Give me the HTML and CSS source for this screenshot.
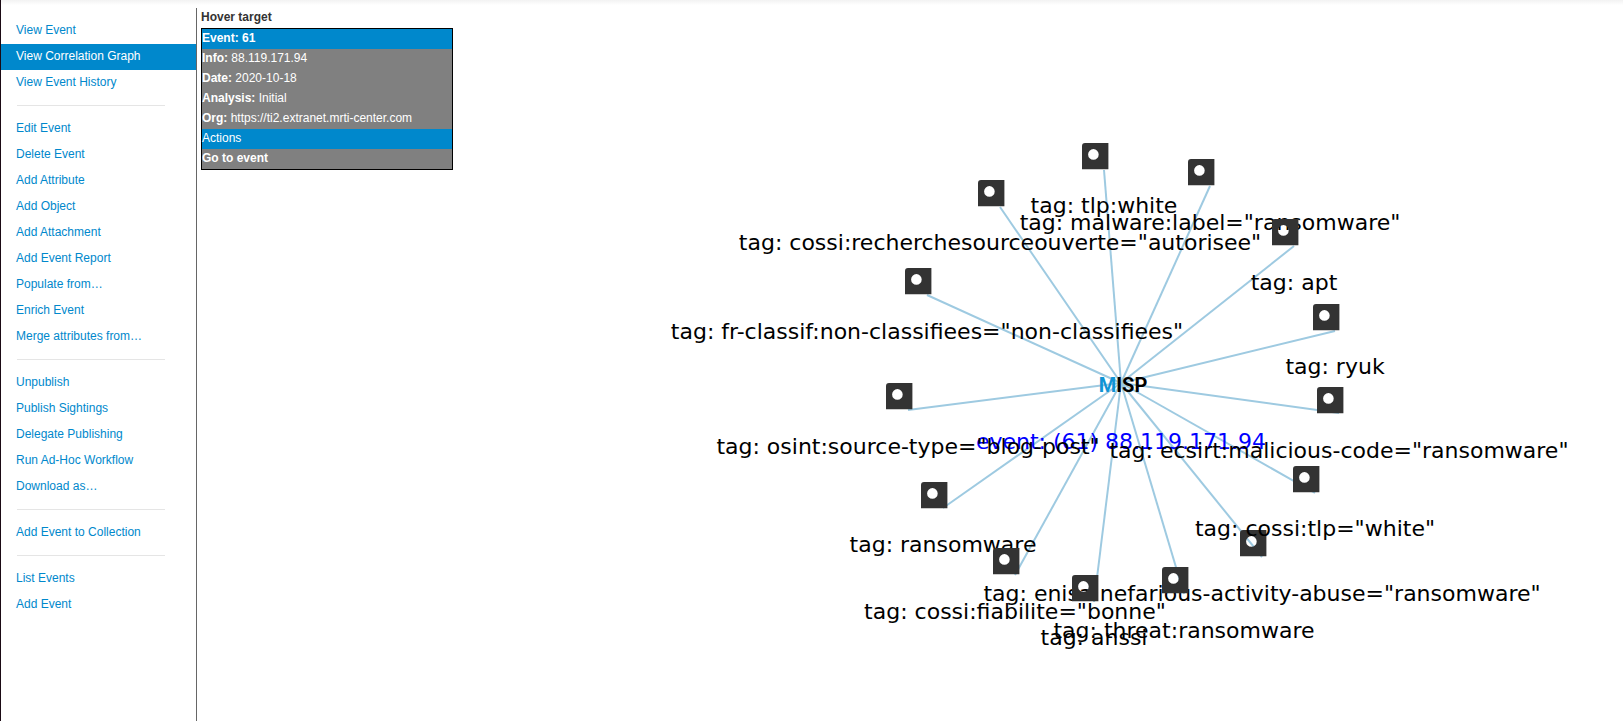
FILE: index.html
```html
<!DOCTYPE html>
<html lang="en">
<head>
<meta charset="utf-8">
<title>Correlation Graph</title>
<link rel="stylesheet" href="styles.css">
</head>
<body>
<div class="page">
  <nav class="sidebar" aria-label="Event menu">
    <ul class="menu">
      <li><a href="#">View Event</a></li>
      <li><a href="#" class="active" aria-current="page">View Correlation Graph</a></li>
      <li><a href="#">View Event History</a></li>
      <li class="divider"></li>
      <li><a href="#">Edit Event</a></li>
      <li><a href="#">Delete Event</a></li>
      <li><a href="#">Add Attribute</a></li>
      <li><a href="#">Add Object</a></li>
      <li><a href="#">Add Attachment</a></li>
      <li><a href="#">Add Event Report</a></li>
      <li><a href="#">Populate from…</a></li>
      <li><a href="#">Enrich Event</a></li>
      <li><a href="#">Merge attributes from…</a></li>
      <li class="divider"></li>
      <li><a href="#">Unpublish</a></li>
      <li><a href="#">Publish Sightings</a></li>
      <li><a href="#">Delegate Publishing</a></li>
      <li><a href="#">Run Ad-Hoc Workflow</a></li>
      <li><a href="#">Download as…</a></li>
      <li class="divider"></li>
      <li><a href="#">Add Event to Collection</a></li>
      <li class="divider"></li>
      <li><a href="#">List Events</a></li>
      <li><a href="#">Add Event</a></li>
    </ul>
  </nav>
  <main class="content">
    <svg class="graph" viewBox="197 0 1426 721" preserveAspectRatio="xMidYMin meet" role="img" aria-label="Correlation graph">
      <defs>
        <path id="tag" d="M-22 -24 a3 3 0 0 1 3 -3 H4.4 V-.8 H-22 Z M-15.9 -15.6 a5.3 5.3 0 1 0 10.6 0 a5.3 5.3 0 1 0 -10.6 0 Z" fill-rule="evenodd"/>
      </defs>
      <g class="links">
        <path d="M1121 383 L1000 207"/>
        <path d="M1121 383 L927 295"/>
        <path d="M1121 383 L1104 170"/>
        <path d="M1121 383 L1210 186"/>
        <path d="M1121 383 L1294 246"/>
        <path d="M1121 383 L1335 331"/>
        <path d="M1121 383 L1339 413"/>
        <path d="M1121 383 L1315 493"/>
        <path d="M1121 383 L1262 557"/>
        <path d="M1121 383 L1184 594"/>
        <path d="M1121 383 L1094 602"/>
        <path d="M1121 383 L1015 575"/>
        <path d="M1121 383 L943 508"/>
        <path d="M1121 383 L908 410"/>
      </g>
      <text class="logo" x="1123" y="392"><tspan class="logo-m">M</tspan>ISP</text>
      <text class="label event" x="1121" y="449">event: (61) 88.119.171.94</text>
      <g transform="translate(908 410)"><use href="#tag"/><text class="label" y="44">tag: osint:source-type="blog-post"</text></g>
      <g transform="translate(1262 557)"><use href="#tag"/><text class="label" y="44">tag: enisa:nefarious-activity-abuse="ransomware"</text></g>
      <g transform="translate(1315 493)"><use href="#tag"/><text class="label" y="43">tag: cossi:tlp="white"</text></g>
      <g transform="translate(1339 414)"><use href="#tag"/><text class="label" y="44">tag: ecsirt:malicious-code="ransomware"</text></g>
      <g transform="translate(1210 186)"><use href="#tag"/><text class="label" y="44">tag: malware:label="ransomware"</text></g>
      <g transform="translate(1294 246)"><use href="#tag"/><text class="label" y="44">tag: apt</text></g>
      <g transform="translate(1335 331)"><use href="#tag"/><text class="label" y="43">tag: ryuk</text></g>
      <g transform="translate(1104 170)"><use href="#tag"/><text class="label" y="43">tag: tlp:white</text></g>
      <g transform="translate(1000 207)"><use href="#tag"/><text class="label" y="43">tag: cossi:recherchesourceouverte="autorisee"</text></g>
      <g transform="translate(927 295)"><use href="#tag"/><text class="label" y="44">tag: fr-classif:non-classifiees="non-classifiees"</text></g>
      <g transform="translate(943 509)"><use href="#tag"/><text class="label" y="43">tag: ransomware</text></g>
      <g transform="translate(1015 575)"><use href="#tag"/><text class="label" y="44">tag: cossi:fiabilite="bonne"</text></g>
      <g transform="translate(1184 594)"><use href="#tag"/><text class="label" y="44">tag: threat:ransomware</text></g>
      <g transform="translate(1094 602)"><use href="#tag"/><text class="label" y="43">tag: anssi</text></g>
    </svg>
    <section class="hover">
      <h2 class="hover-title">Hover target</h2>
      <div class="hover-box">
        <div class="row head"><b>Event: 61</b></div>
        <div class="row"><b>Info:</b> 88.119.171.94</div>
        <div class="row"><b>Date:</b> 2020-10-18</div>
        <div class="row"><b>Analysis:</b> Initial</div>
        <div class="row"><b>Org:</b> https://ti2.extranet.mrti-center.com</div>
        <div class="row head">Actions</div>
        <div class="row"><a href="#">Go to event</a></div>
      </div>
    </section>
  </main>
</div>
</body>
</html>
```
FILE: styles.css
```css
* {
  box-sizing: border-box;
}

body {
  margin: 0;
  background: #fff;
  color: #333;
  font: 12px/20px "Liberation Sans", Arial, sans-serif;
}

.page {
  display: grid;
  grid-template-columns: 196px 1fr;
  min-height: 100vh;
  border-left: 1px solid #1a0a14;
  background: linear-gradient(#f2f2f2, #fff) top / 100% 5px no-repeat;
}

.sidebar {
  margin-top: 8px;
  padding-top: 10px;
  border-right: 1px solid #666;
}

.menu {
  margin: 0;
  padding: 0;
  list-style: none;
}

.menu a {
  display: block;
  padding: 2px 15px 4px;
  color: #08c;
  text-decoration: none;
}

.menu .active {
  background: #08c;
  color: #fff;
}

.divider {
  height: 1px;
  margin: 9px 31px 10px 16px;
  background: #e5e5e5;
}

.content {
  display: grid;
  align-items: start;
  min-width: 0;
}

.graph,
.hover {
  grid-area: 1 / 1;
}

.graph {
  display: block;
  width: 100%;
}

.graph use {
  fill: #333;
}

.links {
  fill: none;
  stroke: #9ecae1;
  stroke-width: 2px;
}

.label {
  font: 22px "DejaVu Sans", sans-serif;
  text-anchor: middle;
  fill: #000;
}

.event {
  fill: #00f;
}

.logo {
  font: bold 20px Roboto, sans-serif;
  text-anchor: middle;
  fill: #000;
}

.logo-m {
  fill: #0f93d4;
}

.hover {
  width: 252px;
  margin: 7px 0 0 4px;
}

.hover-title {
  margin: 0 0 1px;
  font-size: 12px;
  line-height: 20px;
}

.hover-box {
  border: 1px solid #000;
  background: gray;
  color: #fff;
}

.row {
  padding-bottom: 2px;
  line-height: 18px;
}

.head {
  background: #08c;
}

.row a {
  color: #fff;
  font-weight: bold;
  text-decoration: none;
}
```
